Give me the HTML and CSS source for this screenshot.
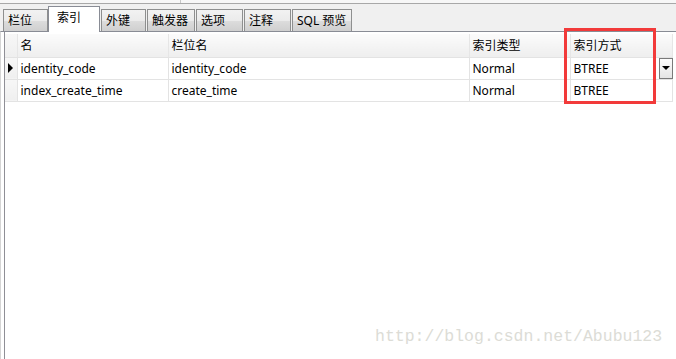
FILE: index.html
```html
<!DOCTYPE html>
<html lang="zh-CN">
<head>
    <meta charset="UTF-8">
    <title>索引</title>
    <link rel="stylesheet" href="styles.css">
</head>
<body>
    <div class="window">
        <div class="topbar"><span class="tick"></span></div>
        <div class="tabstrip">
            <div class="tab">栏位</div>
            <div class="tab active">索引</div>
            <div class="tab">外键</div>
            <div class="tab">触发器</div>
            <div class="tab">选项</div>
            <div class="tab">注释</div>
            <div class="tab">SQL 预览</div>
        </div>
        <div class="panel">
            <table class="grid">
                <colgroup>
                    <col class="c-ind">
                    <col class="c-name">
                    <col class="c-field">
                    <col class="c-type">
                    <col class="c-method">
                </colgroup>
                <thead>
                    <tr>
                        <th class="ind"></th>
                        <th>名</th>
                        <th>栏位名</th>
                        <th>索引类型</th>
                        <th>索引方式</th>
                    </tr>
                </thead>
                <tbody>
                    <tr>
                        <td class="ind"><span class="arrow"></span></td>
                        <td>identity_code</td>
                        <td>identity_code</td>
                        <td>Normal</td>
                        <td>
                            <div class="combo">
                                <span>BTREE</span>
                                <span class="drop"><span class="caret"></span></span>
                            </div>
                        </td>
                    </tr>
                    <tr>
                        <td class="ind"></td>
                        <td>index_create_time</td>
                        <td>create_time</td>
                        <td>Normal</td>
                        <td>BTREE</td>
                    </tr>
                </tbody>
            </table>
        </div>
        <div class="highlight"></div>
        <div class="watermark">http://blog.csdn.net/Abubu123</div>
    </div>
</body>
</html>
```

FILE: styles.css
```css
* {
    margin: 0;
    padding: 0;
    box-sizing: border-box;
}

body {
    font-family: 'Noto Sans', 'Noto Sans CJK SC', sans-serif;
    font-size: 12px;
    color: #000;
    background: #fff;
}

.window {
    position: relative;
    width: 676px;
    height: 359px;
    overflow: hidden;
    display: flex;
    flex-direction: column;
}

.topbar {
    position: relative;
    height: 4px;
    background: #f7f7f7;
    border-bottom: 1px solid #a8a8a8;
}

.tick {
    position: absolute;
    left: 180px;
    top: 0;
    width: 1px;
    height: 3px;
    background: #c8c8c8;
}

.tabstrip {
    display: flex;
    align-items: flex-end;
    height: 27px;
    padding-left: 3px;
    background: #f0f0f0;
}

.tab {
    height: 22px;
    margin-right: 1px;
    padding: 0 4px;
    line-height: 21px;
    font-size: 12px;
    white-space: nowrap;
    color: #000;
    background: linear-gradient(#f2f2f2 0%, #ebebeb 50%, #dddddd 51%, #cfcfcf 100%);
    border: 1px solid #8e8f8f;
    border-bottom: none;
}

.tab:nth-child(1) { width: 45px; }
.tab:nth-child(3) { width: 45px; }
.tab:nth-child(4) { width: 48px; }
.tab:nth-child(5) { width: 47px; }
.tab:nth-child(6) { width: 47px; }
.tab:nth-child(7) { width: 60px; }

.tab.active {
    width: 52px;
    height: 26px;
    margin: 0 1px 0 -1px;
    padding-left: 8px;
    line-height: 22px;
    background: #fff;
    border-color: #898c95;
    position: relative;
    top: 1px;
}

.panel {
    flex: 1;
    background: #fff;
    border-top: 1px solid #898c95;
    padding: 2px 0 0 4px;
    border-left: 1px solid #d5d5d5;
    box-shadow: inset 3px 0 0 #fff, inset 4px 0 0 #8f8f96;
}

.grid {
    border-collapse: collapse;
    table-layout: fixed;
    width: 667px;
}

.c-ind { width: 12px; }
.c-name { width: 151px; }
.c-field { width: 301px; }
.c-type { width: 101px; }
.c-method { width: 102px; }

.grid th,
.grid td {
    height: 22px;
    padding: 0 0 0 3px;
    text-align: left;
    font-weight: normal;
    white-space: nowrap;
    border-right: 1px solid #e3e3e3;
    border-bottom: 1px solid #e3e3e3;
}

.grid th {
    height: 23px;
    background: linear-gradient(#fbfbfb, #eeeeee);
    border-right-color: #e6e6e6;
}

.grid .ind {
    padding: 0;
    background: linear-gradient(#f7f7f7, #efefef);
}

.arrow {
    display: block;
    width: 0;
    height: 0;
    margin-left: 3px;
    border-top: 5px solid transparent;
    border-bottom: 5px solid transparent;
    border-left: 5px solid #000;
}

.combo {
    display: flex;
    align-items: center;
    justify-content: space-between;
}

.drop {
    display: flex;
    align-items: center;
    justify-content: center;
    width: 14px;
    height: 21px;
    margin-right: -1px;
    background: linear-gradient(#fdfdfd, #e4e4e4);
    border: 1px solid #7a7a7a;
}

.caret {
    width: 0;
    height: 0;
    border-left: 4px solid transparent;
    border-right: 4px solid transparent;
    border-top: 4px solid #000;
}

.highlight {
    position: absolute;
    left: 564px;
    top: 28px;
    width: 92px;
    height: 76px;
    border: 3px solid #f23a3a;
}

.watermark {
    position: absolute;
    left: 375px;
    top: 327px;
    font-family: 'Liberation Mono', monospace;
    font-size: 16.5px;
    color: #dcdcd6;
}
```
